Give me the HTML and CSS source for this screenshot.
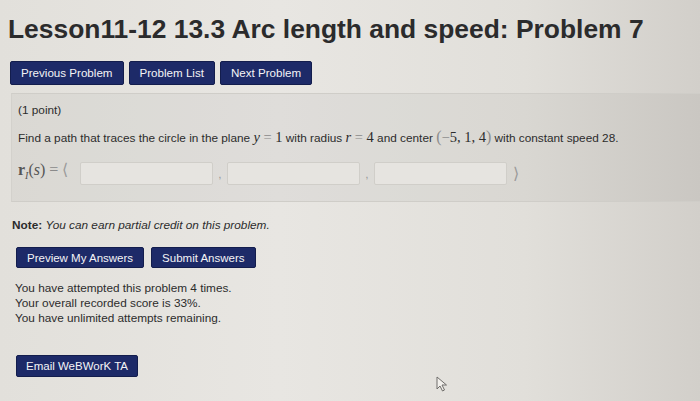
FILE: index.html
```html
<!DOCTYPE html>
<html lang="en">
<head>
  <meta charset="UTF-8">
  <title>Lesson11-12 13.3 Arc length and speed: Problem 7</title>
  <link rel="stylesheet" href="styles.css">
</head>
<body>
<div class="page">
  <h1 class="page-title">Lesson11-12 13.3 Arc length and speed: Problem 7</h1>

  <nav class="problem-nav">
    <a class="wb-btn" href="#">Previous Problem</a>
    <a class="wb-btn" href="#">Problem List</a>
    <a class="wb-btn" href="#">Next Problem</a>
  </nav>

  <div class="problem-box">
    <p class="points">(1 point)</p>
    <p class="statement">Find a path that traces the circle in the plane <span class="math"><i>y</i> <span class="op">=</span> 1</span> with radius <span class="math"><i>r</i> <span class="op">=</span> 4</span> and center <span class="math"><span class="paren">(</span><span class="op">&minus;</span>5, 1, 4<span class="paren">)</span></span> with constant speed 28.</p>
    <div class="answer-row">
      <span class="math lhs"><b>r</b><sub><i>I</i></sub>(<i>s</i>) <span class="op">=</span> <span class="angle">&#10216;</span></span>
      <input class="answer" type="text">
      <span class="sep">,</span>
      <input class="answer" type="text">
      <span class="sep">,</span>
      <input class="answer" type="text">
      <span class="angle close">&#10217;</span>
    </div>
  </div>

  <p class="note"><b>Note:</b> <em>You can earn partial credit on this problem.</em></p>

  <div class="submit-row">
    <button class="wb-btn" type="button">Preview My Answers</button>
    <button class="wb-btn" type="button">Submit Answers</button>
  </div>

  <div class="attempts">
    <p>You have attempted this problem 4 times.</p>
    <p>Your overall recorded score is 33%.</p>
    <p>You have unlimited attempts remaining.</p>
  </div>

  <button class="wb-btn email" type="button">Email WeBWorK TA</button>

  <svg class="cursor" width="12" height="16" viewBox="0 0 12 16">
    <path d="M1 1 L1 13 L4 10 L6.5 15 L8.5 14 L6 9 L10.5 9 Z" fill="#f2f0ec" stroke="#6f6d6a" stroke-width="1"/>
  </svg>
</div>
</body>
</html>
```

FILE: styles.css
```css
* {
  box-sizing: border-box;
}

html, body {
  margin: 0;
  height: 100%;
}

body {
  background: linear-gradient(90deg, #e2e0db 0%, #e8e6e2 40%, #e1dfda 75%, #d2cfca 100%);
  color: #2c2c2c;
  font-family: "Liberation Sans", Arial, sans-serif;
  font-size: 11.8px;
  overflow: hidden;
}

.page {
  position: relative;
  height: 100%;
  padding: 14px 0 0 8px;
}

.page-title {
  margin: 0;
  font-size: 26.4px;
  font-weight: bold;
  color: #2b2b2c;
  line-height: 30px;
}

/* navigation + buttons */
.problem-nav {
  display: flex;
  gap: 5px;
  margin: 17px 0 0 2px;
}

.wb-btn {
  display: inline-block;
  background: #1d2a68;
  color: #f4f4f6;
  border: 1px solid #131d4d;
  border-radius: 2px;
  font-family: "Liberation Sans", Arial, sans-serif;
  font-size: 11.5px;
  line-height: 14px;
  padding: 3px 10px;
  text-decoration: none;
  cursor: pointer;
}

.problem-nav .wb-btn {
  height: 24px;
  padding: 4px 10px;
  font-size: 11.6px;
}

/* problem box */
.problem-box {
  margin: 8px 0 0 3px;
  padding: 7px 0 16px 6px;
  background: rgba(0, 0, 0, 0.035);
  border-top: 1px solid #cfcdc8;
  border-left: 1px solid #d3d1cc;
  border-bottom: 1px solid #cfcdc8;
}

.points {
  margin: 0;
  line-height: 18px;
}

.statement {
  margin: 10px 0 0;
  line-height: 18px;
}

.math {
  font-family: "Liberation Serif", "Times New Roman", serif;
  font-size: 14.5px;
  line-height: 14px;
}

.math .op {
  color: #8a8a8a;
}

.paren {
  color: #8c8c8c;
  font-size: 16px;
}

.answer-row {
  display: flex;
  align-items: center;
  margin-top: 15px;
}

.lhs {
  width: 62px;
  font-size: 16px;
  color: #555;
  white-space: nowrap;
}

.lhs sub {
  font-size: 10px;
}

.angle {
  color: #9a9a9a;
  font-size: 16px;
}

.answer {
  width: 133px;
  height: 23px;
  background: #e6e4e0;
  border: 1px solid #d0cec9;
  border-radius: 2px;
  margin: 0;
}

.sep {
  width: 14px;
  text-align: center;
  color: #999;
}

.close {
  margin-left: 6px;
  font-family: "Liberation Serif", serif;
}

.note {
  margin: 15px 0 0 4px;
  line-height: 16px;
}

.note em {
  font-style: italic;
}

.submit-row {
  display: flex;
  gap: 7px;
  margin: 14px 0 0 8px;
}

.submit-row .wb-btn {
  height: 21px;
}

.attempts {
  margin: 13px 0 0 7px;
}

.attempts p {
  margin: 0;
  line-height: 15px;
}

.email {
  margin: 29px 0 0 8px;
  height: 22px;
  padding: 3px 9px;
}

.cursor {
  position: absolute;
  left: 436px;
  top: 376px;
}
```
